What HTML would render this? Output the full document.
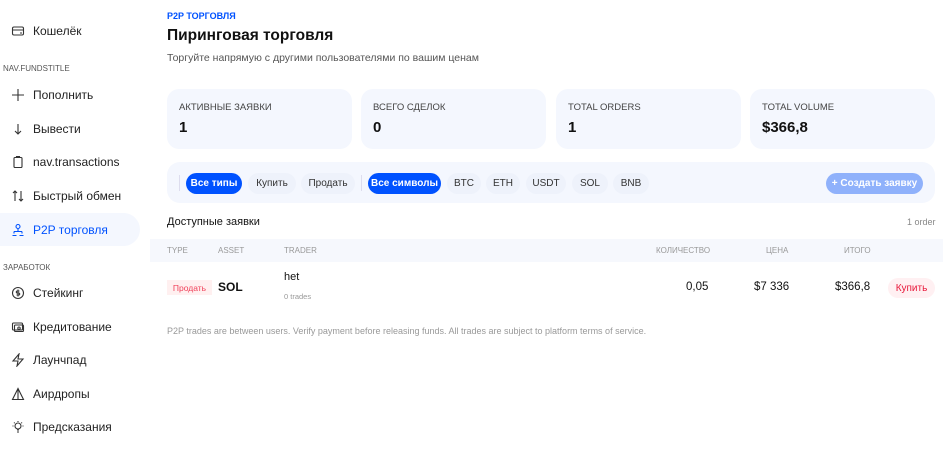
<!DOCTYPE html>
<html><head><meta charset="utf-8"><style>
*{box-sizing:border-box;margin:0;padding:0}
body{width:943px;height:449px;overflow:hidden;background:#fff;font-family:"Liberation Sans","Noto Sans CJK SC",sans-serif;color:#111;position:relative}
.a{position:absolute}
.nav{left:0;width:140px;height:33px;display:flex;align-items:center;font-size:12px;color:#222}
.nav svg{position:absolute;left:11px;width:14px;height:14px}
.nav span{position:absolute;left:33px}
.sec{left:3px;font-size:8px;color:#555}
.card{top:89px;height:60px;width:185px;background:#f4f7fe;border-radius:12px}
.card .l{position:absolute;left:12px;top:13px;font-size:9.5px;color:#444}
.card .v{position:absolute;left:12px;top:30px;font-size:15px;font-weight:bold}
.pill{top:173px;height:21px;border-radius:11px;font-size:10px;display:flex;align-items:center;justify-content:center;background:#eef2fb;color:#333}
.pill.on{background:#0052ff;color:#fff;font-weight:bold}
.th{font-size:8px;color:#999;top:246px}
</style></head><body>
<div class="a nav" style="top:14px"><svg viewBox="0 0 14 14" fill="none" stroke="#333" stroke-width="1.1"><rect x="1.5" y="3" width="11" height="8" rx="1.5"/><path d="M1.5 6h11M9 9h2"/></svg><span>Кошелёк</span></div>
<div class="a sec" style="top:64px">NAV.FUNDSTITLE</div>
<div class="a nav" style="top:78px"><svg viewBox="0 0 14 14" fill="none" stroke="#333" stroke-width="1.1"><path d="M7 1v12M1 7h12"/></svg><span>Пополнить</span></div>
<div class="a nav" style="top:112px"><svg viewBox="0 0 14 14" fill="none" stroke="#333" stroke-width="1.1"><path d="M7 2v10M4 9l3 3 3-3"/></svg><span>Вывести</span></div>
<div class="a nav" style="top:145px"><svg viewBox="0 0 14 14" fill="none" stroke="#333" stroke-width="1.1"><rect x="3" y="2.5" width="8" height="10" rx="1"/><path d="M5.5 2.5v-1h3v1"/></svg><span>nav.transactions</span></div>
<div class="a nav" style="top:179px"><svg viewBox="0 0 14 14" fill="none" stroke="#333" stroke-width="1.1"><path d="M4 12V2M2 4l2-2 2 2M10 2v10M8 10l2 2 2-2"/></svg><span>Быстрый обмен</span></div>
<div class="a nav" style="top:213px;background:#f4f7fe;border-radius:0 17px 17px 0;color:#0052ff"><svg viewBox="0 0 14 14" fill="none" stroke="#0052ff" stroke-width="1.1"><circle cx="7" cy="3.5" r="2"/><path d="M7 5.5v3M3 8.5h8M3 8.5v2M11 8.5v2M1.5 12.5h4M8.5 12.5h4"/></svg><span>P2P торговля</span></div>
<div class="a sec" style="top:263px">ЗАРАБОТОК</div>
<div class="a nav" style="top:276px"><svg viewBox="0 0 14 14" fill="none" stroke="#333" stroke-width="1.1"><circle cx="7" cy="7" r="5.5"/><path d="M8.5 5H6.3a1 1 0 000 2h1.4a1 1 0 010 2H5.5M7 3.5v7"/></svg><span>Стейкинг</span></div>
<div class="a nav" style="top:310px"><svg viewBox="0 0 14 14" fill="none" stroke="#333" stroke-width="1.1"><rect x="1.5" y="3" width="10" height="7" rx="1"/><rect x="3.5" y="5" width="9" height="6.5" rx="1"/><circle cx="8" cy="8.2" r="1.2"/></svg><span>Кредитование</span></div>
<div class="a nav" style="top:343px"><svg viewBox="0 0 14 14" fill="none" stroke="#333" stroke-width="1.1"><path d="M8 1L2 8h5l-1 5 6-7H7z"/></svg><span>Лаунчпад</span></div>
<div class="a nav" style="top:377px"><svg viewBox="0 0 14 14" fill="none" stroke="#333" stroke-width="1.1"><path d="M7 1.5L1.5 12.5h11zM7 1.5v11"/></svg><span>Аирдропы</span></div>
<div class="a nav" style="top:410px"><svg viewBox="0 0 14 14" fill="none" stroke="#333" stroke-width="1.1"><circle cx="7" cy="6" r="3"/><path d="M6 10h2M6 12h2M7 1v1M1.5 6h1M11.5 6h1M3 2.5l.7.7M11 2.5l-.7.7"/></svg><span>Предсказания</span></div>

<div class="a" style="left:167px;top:11px;font-size:9px;color:#0052ff;font-weight:bold">P2P ТОРГОВЛЯ</div>
<div class="a" style="left:167px;top:27px;font-size:15.5px;font-weight:bold;color:#111">Пиринговая торговля</div>
<div class="a" style="left:167px;top:52px;font-size:10.5px;color:#555">Торгуйте напрямую с другими пользователями по вашим ценам</div>

<div class="a card" style="left:167px"><div class="l">АКТИВНЫЕ ЗАЯВКИ</div><div class="v">1</div></div>
<div class="a card" style="left:361px"><div class="l">ВСЕГО СДЕЛОК</div><div class="v">0</div></div>
<div class="a card" style="left:556px"><div class="l">TOTAL ORDERS</div><div class="v">1</div></div>
<div class="a card" style="left:750px"><div class="l">TOTAL VOLUME</div><div class="v">$366,8</div></div>

<div class="a" style="left:167px;top:162px;width:768px;height:41px;background:#f4f7fe;border-radius:13px"></div>
<div class="a" style="left:179px;top:175px;width:1px;height:16px;background:#dde"></div>
<div class="a pill on" style="left:186px;width:56px">Все типы</div>
<div class="a pill" style="left:248px;width:48px">Купить</div>
<div class="a pill" style="left:301px;width:54px">Продать</div>
<div class="a" style="left:361px;top:175px;width:1px;height:16px;background:#dde"></div>
<div class="a pill on" style="left:368px;width:73px">Все символы</div>
<div class="a pill" style="left:447px;width:34px">BTC</div>
<div class="a pill" style="left:486px;width:34px">ETH</div>
<div class="a pill" style="left:526px;width:40px">USDT</div>
<div class="a pill" style="left:572px;width:36px">SOL</div>
<div class="a pill" style="left:613px;width:36px">BNB</div>
<div class="a pill" style="left:826px;width:97px;background:#8fb1fb;color:#fff;font-weight:bold">+ Создать заявку</div>

<div class="a" style="left:167px;top:216px;font-size:11px">Доступные заявки</div>
<div class="a" style="left:907px;top:217px;font-size:9px;color:#888">1 order</div>
<div class="a" style="left:150px;top:239px;width:793px;height:23px;background:#f6f8fd"></div>
<div class="a th" style="left:167px">TYPE</div>
<div class="a th" style="left:218px">ASSET</div>
<div class="a th" style="left:284px">TRADER</div>
<div class="a th" style="left:656px">КОЛИЧЕСТВО</div>
<div class="a th" style="left:766px">ЦЕНА</div>
<div class="a th" style="left:844px">ИТОГО</div>
<div class="a" style="left:167px;top:280px;width:45px;height:15px;background:#fff0f0;color:#f0415a;font-size:8.5px;display:flex;align-items:center;justify-content:center">Продать</div>
<div class="a" style="left:218px;top:280px;font-size:12px;font-weight:bold">SOL</div>
<div class="a" style="left:284px;top:271px;font-size:11px">het</div>
<div class="a" style="left:284px;top:292px;font-size:7.5px;color:#999">0 trades</div>
<div class="a" style="left:686px;top:281px;font-size:11.5px">0,05</div>
<div class="a" style="left:754px;top:281px;font-size:11.5px">$7 336</div>
<div class="a" style="left:835px;top:281px;font-size:11.5px">$366,8</div>
<div class="a" style="left:888px;top:278px;width:47px;height:20px;border-radius:10px;background:#fff0f2;color:#e8173a;font-size:10px;display:flex;align-items:center;justify-content:center">Купить</div>
<div class="a" style="left:167px;top:326px;font-size:9px;color:#999">P2P trades are between users. Verify payment before releasing funds. All trades are subject to platform terms of service.</div>
</body></html>
